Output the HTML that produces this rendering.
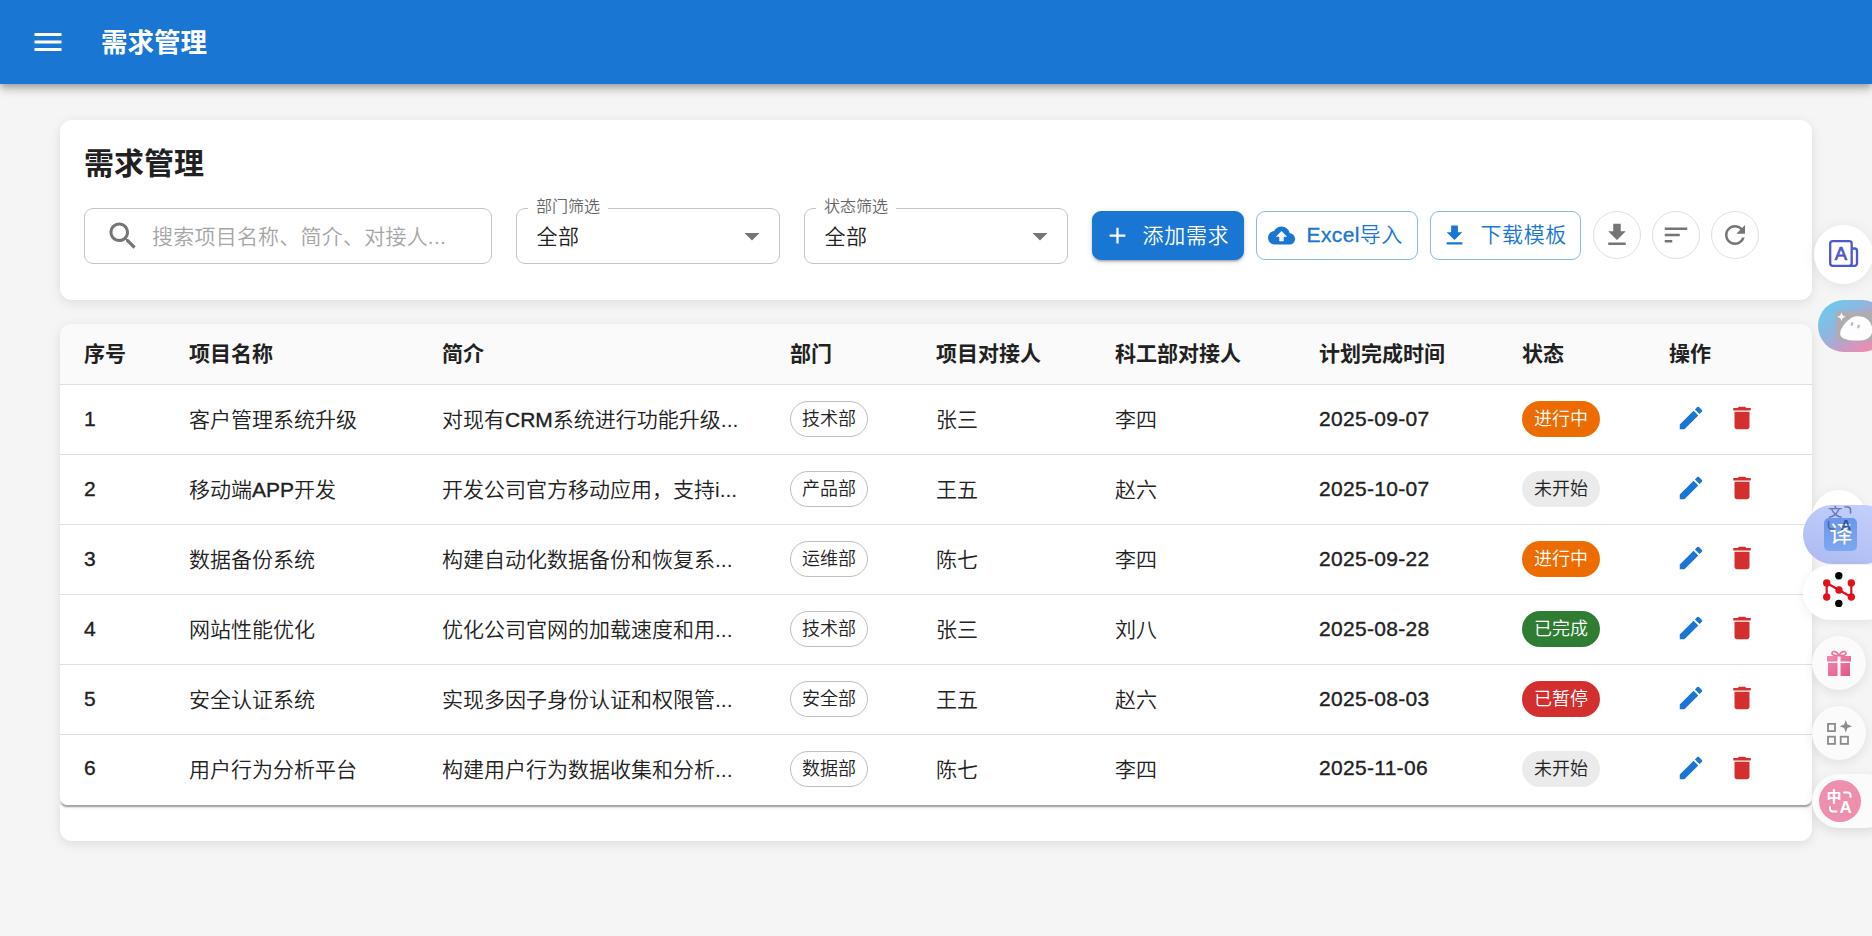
<!DOCTYPE html>
<html lang="zh-CN">
<head>
<meta charset="utf-8">
<title>需求管理</title>
<style>
*{box-sizing:border-box;margin:0;padding:0}
html,body{width:1872px;height:936px;overflow:hidden}
body{background:#f5f5f5;font-family:"Liberation Sans","Noto Sans CJK SC",sans-serif;color:#212121;position:relative;font-weight:350}
svg{display:block}
/* app bar */
.appbar{position:absolute;left:0;top:0;width:1872px;height:84px;background:#1976d2;box-shadow:0 3px 6px -1px rgba(0,0,0,.2),0 6px 8px 0 rgba(0,0,0,.14),0 1px 15px 0 rgba(0,0,0,.12);z-index:5}
.appbar .menu{position:absolute;left:30px;top:24px;width:36px;height:36px;fill:#fff}
.appbar h1{position:absolute;left:101px;top:23px;height:40px;line-height:40px;font-size:26.5px;font-weight:700;color:#fff;letter-spacing:0}
/* cards */
.card{position:absolute;left:60px;width:1752px;background:#fff;border-radius:12px;box-shadow:0 3px 12px rgba(0,0,0,.1)}
.filter{top:120px;height:180px}
.filter h2{position:absolute;left:24px;top:22px;font-size:30px;line-height:44px;font-weight:700;color:#212121}
.field{position:absolute;top:88px;height:56px;border:1.5px solid #c4c4c4;border-radius:9px;background:#fff}
.search{left:24px;width:408px}
.search svg{position:absolute;left:19.5px;top:8.5px;width:36px;height:36px;fill:#757575}
.search span{position:absolute;left:67px;top:0;height:53px;line-height:55px;font-size:21px;color:#a6a6a6;white-space:nowrap;letter-spacing:.22px}
.select .lbl{position:absolute;left:11px;top:-13px;height:22px;line-height:22px;padding:0 8px;background:#fff;font-size:16px;color:#666;white-space:nowrap}
.select .val{position:absolute;left:19.5px;top:0;height:53px;line-height:55px;letter-spacing:.5px;font-size:21px;color:#212121}
.select svg{position:absolute;right:9px;top:8.5px;width:36px;height:36px;fill:#757575}
.sel1{left:456px;width:264px}
.sel2{left:744px;width:264px}
.btn{position:absolute;top:91px;height:49px;border-radius:9px;font-size:21px;line-height:49px;white-space:nowrap}
.btn svg{position:absolute;left:12px;top:11px;width:27px;height:27px}
.btn span{position:absolute;left:51px;top:0}
.btn.primary span{left:50.500px;letter-spacing:.7px}
.btn.primary{left:1032px;width:152px;background:#1976d2;color:#fff;box-shadow:0 3px 2px -2px rgba(0,0,0,.2),0 2px 3px 0 rgba(0,0,0,.14),0 1px 6px 0 rgba(0,0,0,.12)}
.btn.primary svg{fill:#fff}
.btn.outl{border:1.5px solid rgba(25,118,210,.5);color:#1976d2;line-height:46px}
.btn.outl svg{fill:#1976d2;left:10.5px;top:9.5px}
.btn.outl span{left:49.5px}
.b2{left:1196px;width:162px}
.b2 span{letter-spacing:.4px}
.b3 span{letter-spacing:.6px}
.btn.b3 svg{left:10px}
.l{-webkit-text-stroke:.35px currentColor}
.b3{left:1370px;width:151px}
.ib{position:absolute;top:91px;width:48px;height:48px;border:1.5px solid #e0e0e0;border-radius:50%}
.ib svg{position:absolute;left:7.5px;top:7.5px;width:30px;height:30px;fill:#757575}
.i1{left:1533px}.i2{left:1592px}.i3{left:1651px}
/* table */
.tcard{top:324px;height:517px;overflow:hidden}
.twrap{position:absolute;left:0;top:0;width:1752px;height:481px;border-radius:7px;overflow:hidden;box-shadow:0 3px 1.5px -1.5px rgba(0,0,0,.2),0 1.5px 1.5px 0 rgba(0,0,0,.14),0 1.5px 4px 0 rgba(0,0,0,.12);background:#fff}
table{border-collapse:separate;border-spacing:0;table-layout:fixed;width:1752px;font-size:21px}
th,td{padding:0 24px;text-align:left;white-space:nowrap;overflow:hidden;border-bottom:1px solid #e0e0e0;vertical-align:middle}
th{height:61px;background:#fafafa;font-weight:700;color:#212121;padding-bottom:4px}
td{height:70px;color:#212121;padding-bottom:4px;font-weight:350}
td.num{padding-bottom:1px;letter-spacing:.3px;-webkit-text-stroke:.35px currentColor}
tr:last-child td{border-bottom:0;padding-bottom:5px}
td.desc{text-overflow:ellipsis}
.chip{display:inline-block;position:relative;top:1px;vertical-align:middle;height:36px;line-height:37px;padding:0 12px;border-radius:18px;font-size:18px;min-width:78px;text-align:center}
.chip.o{border:1.5px solid #bdbdbd;line-height:34px;padding:0 10.5px;color:#212121}
.chip.run{background:#ed6c02;color:#fff}
.chip.wait{background:#ebebeb;color:#212121}
.chip.done{background:#2e7d32;color:#fff}
.chip.stop{background:#d32f2f;color:#fff}
.act{display:flex;align-items:center;margin-left:-.75px}
.act svg{width:30px;height:30px;margin:7.5px}
.act svg.e{fill:#1976d2}
.act svg.d{fill:#d32f2f;margin-left:13.5px}
/* floating widgets */
.fw{position:absolute;z-index:9}
.w1{left:1814px;top:225px;width:59px;height:59px;border-radius:50%;background:#fff;box-shadow:0 2px 14px rgba(0,0,0,.08)}
.w1 svg{position:absolute;left:15px;top:14.500px}
.w2{left:1817.500px;top:300px;width:70px;height:51.500px;border-radius:26px;background:linear-gradient(140deg,#62d0f0 0%,#8fb6e0 38%,#c79cc4 62%,#ff85a6 95%);overflow:hidden}
.w2 .sq{position:absolute;left:18px;top:10.500px;width:44px;height:30px;background:#aeacb2;border-radius:3px;filter:blur(1.200px)}
.w2 svg{position:absolute;left:14px;top:5px}
.w3a{left:1812px;top:490px;width:54px;height:54px;border-radius:50%;background:#fff;box-shadow:0 2px 12px rgba(0,0,0,.07)}
.w3{left:1803px;top:505px;width:90px;height:59px;border-radius:29.500px;background:linear-gradient(20deg,#aebcf3 10%,#c3cffb 90%)}
.w3 .yi{position:absolute;left:21px;top:13px;width:33px;height:33px;border-radius:5px;background:linear-gradient(180deg,#6a97eb,#7ea7f0);color:#fff;text-align:center}
.w3 .yi span{display:block;font-size:23px;line-height:33px;font-weight:400;margin-left:1px}
.w3i{left:1826px;top:503px;width:28px;height:28px;color:rgba(52,70,140,.62)}
.w3i span{position:absolute;left:2px;top:2.500px;font-size:14.500px;line-height:15px;font-weight:500;transform:scaleY(.86);transform-origin:50% 50%}
.w3i b{position:absolute;left:14.500px;top:14px;font-size:15px;line-height:15px;font-weight:700;color:rgba(35,60,140,.8)}
.w3i svg{position:absolute;left:0;top:0}
.w4{left:1803px;top:564.500px;width:90px;height:55px;border-radius:28.500px;background:#fff;box-shadow:0 3px 12px rgba(0,0,0,.07)}
.w4 svg{position:absolute;left:16.200px;top:5.500px}
.w5,.w6{left:1812px;width:54px;height:54px;border-radius:50%;background:#fbfbfb;box-shadow:0 3px 12px rgba(0,0,0,.09)}
.w5{top:636px}.w6{top:706px}
.w5 svg{position:absolute;left:14px;top:13px}
.w6 svg{position:absolute;left:14px;top:13px}
.w7{left:1812px;top:774px;width:80px;height:54px;border-radius:27px;background:#fbfbfb;box-shadow:0 4px 12px rgba(0,0,0,.1)}
.w7 .pk{position:absolute;left:6.500px;top:6px;width:42px;height:42px;border-radius:50%;background:#ee8fae;color:#fff}
.w7 .pk span{position:absolute;left:8px;top:8px;font-size:15px;line-height:17px;font-weight:700}
.w7 .pk b{position:absolute;left:21px;top:18px;font-size:17px;line-height:19px;font-weight:700}
.w7 .pk svg{position:absolute;left:0;top:0}
</style>
</head>
<body>
<header class="appbar">
  <svg class="menu" viewBox="0 0 24 24"><path d="M3 18h18v-2H3v2zm0-5h18v-2H3v2zm0-7v2h18V6H3z"/></svg>
  <h1>需求管理</h1>
</header>

<section class="card filter">
  <h2>需求管理</h2>
  <div class="field search">
    <svg viewBox="0 0 24 24"><path d="M15.5 14h-.79l-.28-.27C15.41 12.59 16 11.11 16 9.5 16 5.91 13.09 3 9.5 3S3 5.91 3 9.5 5.91 16 9.5 16c1.61 0 3.09-.59 4.23-1.57l.27.28v.79l5 4.99L20.49 19l-4.99-5zm-6 0C7.01 14 5 11.99 5 9.5S7.01 5 9.5 5 14 7.01 14 9.5 11.99 14 9.5 14z"/></svg>
    <span>搜索项目名称、简介、对接人...</span>
  </div>
  <div class="field select sel1">
    <div class="lbl">部门筛选</div>
    <div class="val">全部</div>
    <svg viewBox="0 0 24 24"><path d="M7 10l5 5 5-5z"/></svg>
  </div>
  <div class="field select sel2">
    <div class="lbl">状态筛选</div>
    <div class="val">全部</div>
    <svg viewBox="0 0 24 24"><path d="M7 10l5 5 5-5z"/></svg>
  </div>
  <div class="btn primary">
    <svg viewBox="0 0 24 24"><path d="M19 13h-6v6h-2v-6H5v-2h6V5h2v6h6v2z"/></svg>
    <span>添加需求</span>
  </div>
  <div class="btn outl b2">
    <svg viewBox="0 0 24 24"><path d="M19.35 10.04C18.67 6.59 15.64 4 12 4 9.11 4 6.6 5.64 5.35 8.04 2.34 8.36 0 10.91 0 14c0 3.31 2.69 6 6 6h13c2.76 0 5-2.24 5-5 0-2.64-2.05-4.78-4.65-4.96zM14 13v4h-4v-4H7l5-5 5 5h-3z"/></svg>
    <span><span class="l" style="position:static">Excel</span>导入</span>
  </div>
  <div class="btn outl b3">
    <svg viewBox="0 0 24 24"><path d="M19 9h-4V3H9v6H5l7 7 7-7zM5 18v2h14v-2H5z"/></svg>
    <span>下载模板</span>
  </div>
  <div class="ib i1"><svg viewBox="0 0 24 24"><path d="M19 9h-4V3H9v6H5l7 7 7-7zM5 18v2h14v-2H5z"/></svg></div>
  <div class="ib i2"><svg viewBox="0 0 24 24"><path d="M3 18h6v-2H3v2zM3 6v2h18V6H3zm0 7h12v-2H3v2z"/></svg></div>
  <div class="ib i3"><svg viewBox="0 0 24 24"><path d="M17.65 6.35C16.2 4.9 14.21 4 12 4c-4.42 0-7.99 3.58-7.99 8s3.57 8 7.99 8c3.73 0 6.84-2.55 7.73-6h-2.08c-.82 2.33-3.04 4-5.65 4-3.31 0-6-2.69-6-6s2.69-6 6-6c1.66 0 3.14.69 4.22 1.78L13 11h7V4l-2.35 2.35z"/></svg></div>
</section>

<section class="card tcard">
  <div class="twrap">
  <table>
    <colgroup><col style="width:105px"><col style="width:253px"><col style="width:348px"><col style="width:146px"><col style="width:179px"><col style="width:204px"><col style="width:203px"><col style="width:147px"><col style="width:167px"></colgroup>
    <thead><tr><th>序号</th><th>项目名称</th><th>简介</th><th>部门</th><th>项目对接人</th><th>科工部对接人</th><th>计划完成时间</th><th>状态</th><th>操作</th></tr></thead>
    <tbody>
      <tr><td class="num">1</td><td>客户管理系统升级</td><td class="desc">对现有<span class="l">CRM</span>系统进行功能升级...</td><td><span class="chip o">技术部</span></td><td>张三</td><td>李四</td><td class="num">2025-09-07</td><td><span class="chip run">进行中</span></td><td><div class="act"><svg class="e" viewBox="0 0 24 24"><path d="M3 17.25V21h3.75L17.81 9.94l-3.75-3.75L3 17.25zM20.71 7.04c.39-.39.39-1.02 0-1.41l-2.34-2.34a.9959.9959 0 0 0-1.41 0l-1.83 1.83 3.75 3.75 1.83-1.83z"/></svg><svg class="d" viewBox="0 0 24 24"><path d="M6 19c0 1.1.9 2 2 2h8c1.1 0 2-.9 2-2V7H6v12zM19 4h-3.5l-1-1h-5l-1 1H5v2h14V4z"/></svg></div></td></tr>
      <tr><td class="num">2</td><td>移动端<span class="l">APP</span>开发</td><td class="desc">开发公司官方移动应用，支持i...</td><td><span class="chip o">产品部</span></td><td>王五</td><td>赵六</td><td class="num">2025-10-07</td><td><span class="chip wait">未开始</span></td><td><div class="act"><svg class="e" viewBox="0 0 24 24"><path d="M3 17.25V21h3.75L17.81 9.94l-3.75-3.75L3 17.25zM20.71 7.04c.39-.39.39-1.02 0-1.41l-2.34-2.34a.9959.9959 0 0 0-1.41 0l-1.83 1.83 3.75 3.75 1.83-1.83z"/></svg><svg class="d" viewBox="0 0 24 24"><path d="M6 19c0 1.1.9 2 2 2h8c1.1 0 2-.9 2-2V7H6v12zM19 4h-3.5l-1-1h-5l-1 1H5v2h14V4z"/></svg></div></td></tr>
      <tr><td class="num">3</td><td>数据备份系统</td><td class="desc">构建自动化数据备份和恢复系...</td><td><span class="chip o">运维部</span></td><td>陈七</td><td>李四</td><td class="num">2025-09-22</td><td><span class="chip run">进行中</span></td><td><div class="act"><svg class="e" viewBox="0 0 24 24"><path d="M3 17.25V21h3.75L17.81 9.94l-3.75-3.75L3 17.25zM20.71 7.04c.39-.39.39-1.02 0-1.41l-2.34-2.34a.9959.9959 0 0 0-1.41 0l-1.83 1.83 3.75 3.75 1.83-1.83z"/></svg><svg class="d" viewBox="0 0 24 24"><path d="M6 19c0 1.1.9 2 2 2h8c1.1 0 2-.9 2-2V7H6v12zM19 4h-3.5l-1-1h-5l-1 1H5v2h14V4z"/></svg></div></td></tr>
      <tr><td class="num">4</td><td>网站性能优化</td><td class="desc">优化公司官网的加载速度和用...</td><td><span class="chip o">技术部</span></td><td>张三</td><td>刘八</td><td class="num">2025-08-28</td><td><span class="chip done">已完成</span></td><td><div class="act"><svg class="e" viewBox="0 0 24 24"><path d="M3 17.25V21h3.75L17.81 9.94l-3.75-3.75L3 17.25zM20.71 7.04c.39-.39.39-1.02 0-1.41l-2.34-2.34a.9959.9959 0 0 0-1.41 0l-1.83 1.83 3.75 3.75 1.83-1.83z"/></svg><svg class="d" viewBox="0 0 24 24"><path d="M6 19c0 1.1.9 2 2 2h8c1.1 0 2-.9 2-2V7H6v12zM19 4h-3.5l-1-1h-5l-1 1H5v2h14V4z"/></svg></div></td></tr>
      <tr><td class="num">5</td><td>安全认证系统</td><td class="desc">实现多因子身份认证和权限管...</td><td><span class="chip o">安全部</span></td><td>王五</td><td>赵六</td><td class="num">2025-08-03</td><td><span class="chip stop">已暂停</span></td><td><div class="act"><svg class="e" viewBox="0 0 24 24"><path d="M3 17.25V21h3.75L17.81 9.94l-3.75-3.75L3 17.25zM20.71 7.04c.39-.39.39-1.02 0-1.41l-2.34-2.34a.9959.9959 0 0 0-1.41 0l-1.83 1.83 3.75 3.75 1.83-1.83z"/></svg><svg class="d" viewBox="0 0 24 24"><path d="M6 19c0 1.1.9 2 2 2h8c1.1 0 2-.9 2-2V7H6v12zM19 4h-3.5l-1-1h-5l-1 1H5v2h14V4z"/></svg></div></td></tr>
      <tr><td class="num">6</td><td>用户行为分析平台</td><td class="desc">构建用户行为数据收集和分析...</td><td><span class="chip o">数据部</span></td><td>陈七</td><td>李四</td><td class="num">2025-11-06</td><td><span class="chip wait">未开始</span></td><td><div class="act"><svg class="e" viewBox="0 0 24 24"><path d="M3 17.25V21h3.75L17.81 9.94l-3.75-3.75L3 17.25zM20.71 7.04c.39-.39.39-1.02 0-1.41l-2.34-2.34a.9959.9959 0 0 0-1.41 0l-1.83 1.83 3.75 3.75 1.83-1.83z"/></svg><svg class="d" viewBox="0 0 24 24"><path d="M6 19c0 1.1.9 2 2 2h8c1.1 0 2-.9 2-2V7H6v12zM19 4h-3.5l-1-1h-5l-1 1H5v2h14V4z"/></svg></div></td></tr>
    </tbody>
  </table>
  </div>
</section>

<div class="fw w1"><svg viewBox="0 0 30 28" width="30" height="28"><rect x="1.2" y="1.2" width="21.5" height="24.6" rx="2.6" fill="none" stroke="#4e56d0" stroke-width="2.3"/><path d="M23 8.500h2.600a2.400 2.400 0 0 1 2.400 2.400v12.500a2.400 2.400 0 0 1-2.400 2.400H21" fill="none" stroke="#4e56d0" stroke-width="2.3"/><text x="12" y="20.300" font-size="18.500" font-weight="400" text-anchor="middle" fill="#4e56d0" stroke="#4e56d0" stroke-width=".7" font-family="Liberation Sans,sans-serif">A</text></svg></div>
<div class="fw w2"><i class="sq"></i><svg viewBox="0 0 44 40" width="44" height="40"><path d="M9.500 7.400l1.200 3.100 3.100 1.200-3.100 1.200-1.200 3.100-1.200-3.100-3.100-1.200 3.100-1.200z" fill="#fff"/><path d="M23 11.500C30 10.500 38 13 40 22c1.500 7-2 12-9 13.200-7 1-18 .3-21.500-3.200C6.500 29 9 23 13 18.500c3-3.500 6.500-6.500 10-7z" fill="#fdfdfd"/><ellipse cx="20" cy="19" rx="1.300" ry="2" fill="#bdb8c0" transform="rotate(15 20 19)"/><ellipse cx="26.500" cy="21.500" rx="1.300" ry="2" fill="#bdb8c0" transform="rotate(15 26.500 21.500)"/></svg></div>
<div class="fw w3a"></div>
<div class="fw w3"><div class="yi"><span>译</span></div></div>
<div class="fw w3i"><span>文</span><b>A</b><svg viewBox="0 0 28 28" width="28" height="28"><g fill="none" stroke="rgba(52,70,140,.62)" stroke-width="1.600" stroke-linecap="round"><path d="M19 4h2.500a3 3 0 0 1 3 3v3"/><path d="M8 26H5.500a3 3 0 0 1-3-3v-4.500"/></g></svg></div>
<div class="fw w4"><svg viewBox="0 0 40 40" width="40" height="40"><g stroke="#e0101c" stroke-width="2.200" fill="none"><path d="M7.700 13v14M32.300 13v14M7.700 13l24.600 14"/></g><g fill="#e0101c"><circle cx="7.700" cy="13" r="3.700"/><circle cx="32.300" cy="13" r="3.700"/><circle cx="20" cy="20" r="3.700"/><circle cx="7.700" cy="27" r="3.700"/><circle cx="32.300" cy="27" r="3.700"/></g><circle cx="19.800" cy="5.700" r="3.700" fill="#000"/><circle cx="19.800" cy="33.400" r="3.700" fill="#000"/></svg></div>
<div class="fw w5"><svg viewBox="0 0 26 28" width="26" height="28"><defs><linearGradient id="gg" x1="0" y1="0" x2="1" y2="1"><stop offset="0" stop-color="#f58aae"/><stop offset="1" stop-color="#e0558a"/></linearGradient></defs><path d="M13 6.500C11 2 6.500 1.500 6 4.200 5.600 6.300 9.500 7 13 6.500zm0 0c2-4.500 6.500-5 7-2.300.4 2.100-3.500 2.800-7 2.300z" fill="none" stroke="#ec6f9c" stroke-width="1.600"/><path d="M1 7h10.500v5.500H1zM14.500 7H25v5.500H14.500zM2 14h9.500v13H2zM14.500 14H24v13h-9.500z" fill="url(#gg)"/></svg></div>
<div class="fw w6"><svg viewBox="0 0 26 26" width="26" height="26"><g fill="none" stroke="#8c8c8c" stroke-width="1.800"><rect x="2" y="4.900" width="7" height="7.200"/><rect x="2" y="17.700" width="7" height="7.200"/><rect x="14.700" y="17.700" width="7.300" height="7.200"/></g><path d="M19.800 1l1.600 4.600 4.600 1.700-4.600 1.700-1.600 4.600-1.600-4.600-4.600-1.700 4.600-1.700z" fill="#8c8c8c"/></svg></div>
<div class="fw w7"><div class="pk"><span>中</span><b>A</b><svg viewBox="0 0 42 42" width="42" height="42"><g fill="none" stroke="#fff" stroke-width="2" stroke-linecap="round"><path d="M25 12.500h3.500a3 3 0 0 1 3 3V17"/><path d="M17.500 31.500H14a3 3 0 0 1-3-3V27"/></g></svg></div></div>

</body>
</html>
